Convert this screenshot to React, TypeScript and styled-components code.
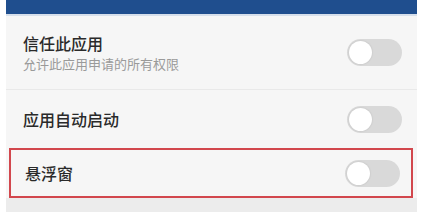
import React from "react";
import styled, { createGlobalStyle } from "styled-components";

const GlobalStyle = createGlobalStyle`
  html, body {
    margin: 0;
    padding: 0;
    background: #ffffff;
  }
  body {
    font-family: "Noto Sans CJK SC", "Noto Sans", sans-serif;
  }
`;

const ScScreen = styled.div`
  width: 411px;
  height: 212px;
  margin-left: 6px;
  background: #f6f6f6;
  display: flex;
  flex-direction: column;
  overflow: hidden;
`;

const ScTitleBar = styled.div`
  height: 14px;
  flex: none;
  background: #1f4e8e;
  border-bottom: 2px solid #d6dfeb;
`;

const ScRow = styled.div<{ $height: number; $divider?: boolean }>`
  height: ${(p) => p.$height}px;
  flex: none;
  box-sizing: border-box;
  display: flex;
  align-items: center;
  justify-content: space-between;
  padding: 0 15px 0 17px;
  border-bottom: ${(p) => (p.$divider ? "1px solid #e9e9e9" : "none")};
`;

const ScHighlight = styled(ScRow)`
  margin: 0 4px 0 3px;
  padding: 0 11px 0 14px;
  border: 2px solid #d2474d;
`;

const ScLabels = styled.div`
  display: flex;
  flex-direction: column;
  gap: 3px;
`;

const ScTitle = styled.div`
  font-size: 16px;
  line-height: 20px;
  font-weight: 500;
  color: #2a2a2a;
`;

const ScSubtitle = styled.div`
  font-size: 13px;
  line-height: 16px;
  color: #9a9a9a;
`;

const ScTrack = styled.div`
  width: 55px;
  height: 27px;
  border-radius: 14px;
  background: #d9d9d9;
  display: flex;
  align-items: center;
  padding-left: 2px;
  box-sizing: border-box;
`;

const ScKnob = styled.div`
  width: 23px;
  height: 23px;
  border-radius: 50%;
  background: #ffffff;
  box-shadow: 0 0 2px rgba(0, 0, 0, 0.15);
`;

const ScFooter = styled.div`
  flex: 1;
  background: #ececec;
`;

const Toggle = () => (
  <ScTrack>
    <ScKnob />
  </ScTrack>
);

export default function App() {
  return (
    <>
      <GlobalStyle />
      <ScScreen>
        <ScTitleBar />
        <ScRow $height={74} $divider>
          <ScLabels>
            <ScTitle>信任此应用</ScTitle>
            <ScSubtitle>允许此应用申请的所有权限</ScSubtitle>
          </ScLabels>
          <Toggle />
        </ScRow>
        <ScRow $height={58}>
          <ScTitle>应用自动启动</ScTitle>
          <Toggle />
        </ScRow>
        <ScHighlight $height={50}>
          <ScTitle>悬浮窗</ScTitle>
          <Toggle />
        </ScHighlight>
        <ScFooter />
      </ScScreen>
    </>
  );
}
